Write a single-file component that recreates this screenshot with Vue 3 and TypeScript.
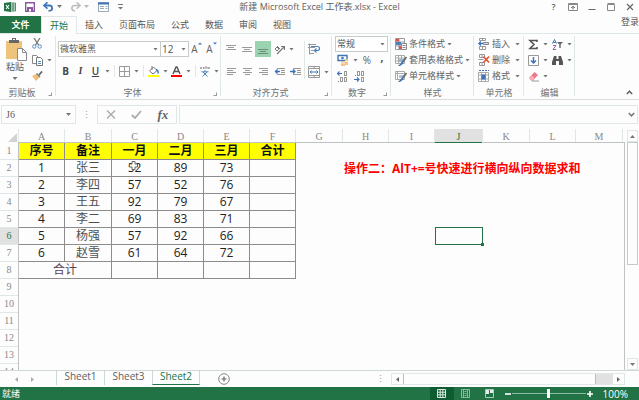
<script setup lang="ts">
import { ref } from 'vue'

interface Row {
  cells: string[]
}

const tabs: string[] = ['插入', '页面布局', '公式', '数据', '审阅', '视图']
const columns: string[] = ['A', 'B', 'C', 'D', 'E', 'F', 'G', 'H', 'I', 'J', 'K', 'L', 'M']
const headings: string[] = ['序号', '备注', '一月', '二月', '三月', '合计']
const rows: Row[] = [
  { cells: ['1', '张三', '52', '89', '73', ''] },
  { cells: ['2', '李四', '57', '52', '76', ''] },
  { cells: ['3', '王五', '92', '79', '67', ''] },
  { cells: ['4', '李二', '69', '83', '71', ''] },
  { cells: ['5', '杨强', '57', '92', '66', ''] },
  { cells: ['6', '赵雪', '61', '64', '72', ''] },
]
const emptyRows: number[] = [9, 10, 11, 12, 13, 14]
const sheets: string[] = ['Sheet1', 'Sheet3', 'Sheet2']
const activeSheet = ref('Sheet2')
const nameBox = ref('J6')
const formula = ref('')
const zoom = ref(100)
</script>

<template>
  <div class="app">
    <header class="title-bar">
      <div class="quick">
        <svg class="logo" width="12" height="10" viewBox="0 0 12 10">
          <path d="M6 1h5.5v8H6z" fill="#fff" stroke="#217346" stroke-width=".8" />
          <path d="M7 3h4M7 5h4M7 7h4M9 1v8" stroke="#217346" stroke-width=".8" />
          <path d="M0 1l7-1v10L0 9z" fill="#217346" />
          <path d="M2 3l3 4M5 3L2 7" stroke="#fff" stroke-width="1.1" />
        </svg>
        <button class="btn save" aria-label="保存">
          <svg width="10" height="10" viewBox="0 0 10 10"><path d="M.7.7h8.6v8.6H.7z" fill="#fff" stroke="#8a5a9e" stroke-width="1.4" /><path d="M2 5h6v4.5H2z" fill="#8a5a9e" /><path d="M4 7h2v2.5H4z" fill="#fff" /></svg>
        </button>
        <button class="btn undo" aria-label="撤消">
          <svg width="11" height="10" viewBox="0 0 11 10"><path d="M1.5 3.5h5a2.6 2.6 0 0 1 1 5L5.5 9" fill="none" stroke="#3d74b8" stroke-width="1.8" /><path d="M4.5.3L.8 3.5l3.7 3.2" fill="none" stroke="#3d74b8" stroke-width="1.6" /></svg>
          <i class="caret"></i>
        </button>
        <button class="btn redo" aria-label="恢复">
          <svg width="11" height="10" viewBox="0 0 11 10"><path d="M9.5 3.5h-5a2.6 2.6 0 0 0-1 5L5 9" fill="none" stroke="#bcbcbc" stroke-width="1.6" /><path d="M6.5.3l3.7 3.2-3.7 3.2" fill="none" stroke="#bcbcbc" stroke-width="1.5" /></svg>
          <i class="caret faint"></i>
        </button>
        <button class="btn form" aria-label="记录单">
          <svg width="11" height="10" viewBox="0 0 11 10"><path d="M.5.5h10v9H.5z" fill="#fff" stroke="#9aa9b8" /><path d="M0 1.500h11" stroke="#3d74b8" stroke-width="2" /><path d="M2 4.500h4M2 6.500h4M7.500 4.500h2M7.500 6.500h2" stroke="#9aa9b8" /></svg>
        </button>
        <button class="btn" aria-label="自定义"><svg width="5" height="6" viewBox="0 0 5 6"><path d="M0 .5h5" stroke="#777" /><path d="M0 3h5L2.500 5.500z" fill="#777" /></svg></button>
      </div>
      <h1>新建 Microsoft Excel 工作表.xlsx - Excel</h1>
      <div class="window-buttons">
        <button class="btn help">?</button>
        <button class="btn" aria-label="功能区显示选项"><svg width="10" height="8" viewBox="0 0 10 8"><path d="M.5.500h9v7h-9zM.5 1.500h9" fill="none" stroke="#888" /><path d="M5 6.500V3.500M3.200 5L5 3.200 6.800 5" fill="none" stroke="#666" /></svg></button>
        <button class="btn" aria-label="最小化"><svg width="8" height="8" viewBox="0 0 8 8"><path d="M.5 6.500h7" stroke="#666" /></svg></button>
        <button class="btn" aria-label="最大化"><svg width="8" height="8" viewBox="0 0 8 8"><path d="M.5 1.500h7v6h-7zM.5.500h7" fill="none" stroke="#888" /></svg></button>
        <button class="btn" aria-label="关闭"><svg width="8" height="8" viewBox="0 0 8 8"><path d="M1 1l6 6M7 1L1 7" stroke="#666" stroke-width="1.200" /></svg></button>
      </div>
    </header>

    <nav class="tabs">
      <button class="tab file">文件</button>
      <button class="tab current">开始</button>
      <button v-for="t in tabs" :key="t" class="tab">{{ t }}</button>
      <a class="login" href="#">登录</a>
    </nav>

    <section class="ribbon">
      <div class="group clipboard">
        <div class="body">
          <button class="btn paste">
            <svg width="21" height="23" viewBox="0 0 21 23"><path d="M0 3h16v18H0z" fill="#eec47c" /><path d="M3 2h3V0h4v2h3v3H3z" fill="#666" /><path d="M7 1.500h2" stroke="#fff" /><path d="M11.500 10.500h5l4 4v8h-9z" fill="#fff" stroke="#888" /><path d="M16.500 10.500v4h4" fill="none" stroke="#888" /></svg>
            <span>粘贴</span>
            <i class="caret"></i>
          </button>
          <div class="clip-tools">
            <button class="btn" aria-label="剪切"><svg width="10" height="11" viewBox="0 0 10 11"><path d="M2 0l4.500 7M8 0L3.500 7" stroke="#777" stroke-width="1.300" /><circle cx="2.300" cy="8.500" r="1.700" fill="none" stroke="#5b8cc4" /><circle cx="7.700" cy="8.500" r="1.700" fill="none" stroke="#5b8cc4" /></svg></button>
            <button class="btn copy" aria-label="复制"><svg width="11" height="11" viewBox="0 0 11 11"><path d="M.5.500h4l2 2v6h-6z" fill="#fff" stroke="#888" /><path d="M4.500 2.500h4l2 2v6h-6z" fill="#fff" stroke="#777" /><path d="M6 6.500h3M6 8.500h3" stroke="#5b8cc4" /></svg><i class="caret"></i></button>
            <button class="btn" aria-label="格式刷"><svg width="11" height="10" viewBox="0 0 11 10"><path d="M0 5l4-2 3.500 3.500L4 10z" fill="#eebf78" /><path d="M4 3l3.500 3.500 1-1L5 2z" fill="#777" /><path d="M7 4l3-3.500" stroke="#666" stroke-width="1.800" /></svg></button>
          </div>
        </div>
        <footer>剪贴板<i class="launcher"></i></footer>
      </div>

      <div class="group font">
        <div class="body col">
          <div class="line">
            <span class="combo family"><select aria-label="字体"><option>微软雅黑</option></select><i class="caret"></i></span>
            <span class="combo size"><select aria-label="字号"><option>12</option></select><i class="caret"></i></span>
            <button class="btn grow" aria-label="增大字号">A<svg width="4" height="10" viewBox="0 0 4 10"><path d="M0 2.500L2 .500l2 2z" fill="#3d74b8" /></svg></button>
            <button class="btn grow" aria-label="减小字号">A<svg width="4" height="10" viewBox="0 0 4 10"><path d="M0 .500h4l-2 2z" fill="#3d74b8" /></svg></button>
          </div>
          <div class="line second">
            <button class="btn letter"><b>B</b></button>
            <button class="btn letter"><em>I</em></button>
            <button class="btn letter"><u>U</u></button>
            <i class="caret"></i>
            <i class="sep"></i>
            <button class="btn drop" aria-label="边框"><svg width="11" height="11" viewBox="0 0 11 11"><path d="M.5.500h10v10H.5zM5.500.500v10M.5 5.500h10" fill="none" stroke="#999" /></svg><i class="caret"></i></button>
            <i class="sep"></i>
            <button class="btn drop" aria-label="填充颜色"><svg width="11" height="11" viewBox="0 0 11 11"><path d="M1.500 5l4-4L9 4.500 5 8z" fill="#fff" stroke="#777" /><path d="M4 0v4" stroke="#777" /><path d="M8 3.500c2 .5 2.500 2 2 4" fill="none" stroke="#3d74b8" stroke-width="1.400" /><path d="M0 9h11v2H0z" fill="#ff0" /></svg><i class="caret"></i></button>
            <button class="btn drop" aria-label="字体颜色"><svg width="11" height="11" viewBox="0 0 11 11"><path d="M2 8l3-7h1l3 7M3.500 5.500h4" fill="none" stroke="#555" stroke-width="1.400" /><path d="M0 9h11v2H0z" fill="#f00" /></svg><i class="caret"></i></button>
            <i class="sep"></i>
            <button class="btn drop" aria-label="拼音"><svg width="10" height="11" viewBox="0 0 10 11"><path d="M0 1l1 2 1-2M3.500 1v2M5 3V1h2v2M8 1l1 2 1-2" fill="none" stroke="#999" /><path d="M5 4v1.500M1.500 5.800h7M3 6l4.500 4.500M7 6l-4.500 4.500" stroke="#4b82bd" /></svg><i class="caret"></i></button>
          </div>
        </div>
        <footer>字体<i class="launcher"></i></footer>
      </div>

      <div class="group align">
        <div class="body">
          <div class="align-tools">
            <div class="line">
              <button class="btn" aria-label="顶端对齐"><svg width="10" height="11" viewBox="0 0 10 11"><path d="M0 1.500h10M2 3.500h6M0 5.500h10" stroke="#999" /></svg></button>
              <button class="btn" aria-label="垂直居中"><svg width="10" height="11" viewBox="0 0 10 11"><path d="M0 3.500h10M2 5.500h6M0 7.500h10" stroke="#999" /></svg></button>
              <button class="btn on" aria-label="底端对齐"><svg width="10" height="11" viewBox="0 0 10 11"><path d="M0 5.500h10M2 7.500h6M0 9.500h10" stroke="#6b8f7c" /></svg></button>
              <button class="btn drop" aria-label="方向"><svg width="11" height="11" viewBox="0 0 11 11"><path d="M3 10l7-7M7 2.500h3.500V6" fill="none" stroke="#777" stroke-width="1.200" /><path d="M1 5l2-2 2 2-2 2zM3 2l3 3" fill="none" stroke="#777" /></svg><i class="caret"></i></button>
            </div>
            <div class="line">
              <button class="btn" aria-label="左对齐"><svg width="9" height="9" viewBox="0 0 9 9"><path d="M0 1.500h9M0 3.500h6M0 5.500h9M0 7.500h6" stroke="#999" /></svg></button>
              <button class="btn" aria-label="居中"><svg width="9" height="9" viewBox="0 0 9 9"><path d="M0 1.500h9M2 3.500h5M0 5.500h9M2 7.500h5" stroke="#999" /></svg></button>
              <button class="btn" aria-label="右对齐"><svg width="9" height="9" viewBox="0 0 9 9"><path d="M0 1.500h9M3 3.500h6M0 5.500h9M3 7.500h6" stroke="#999" /></svg></button>
              <button class="btn" aria-label="减少缩进"><svg width="11" height="9" viewBox="0 0 11 9"><path d="M3 1.500h8M7 3.500h4M7 5.500h4M3 7.500h8" stroke="#999" /><path d="M6 4.500H1.500M3.500 2.500l-2 2 2 2" fill="none" stroke="#3d74b8" stroke-width="1.400" /></svg></button>
              <button class="btn" aria-label="增加缩进"><svg width="11" height="9" viewBox="0 0 11 9"><path d="M3 1.500h8M7 3.500h4M7 5.500h4M3 7.500h8" stroke="#999" /><path d="M0 4.500h4.500M3 2.500l2 2-2 2" fill="none" stroke="#3d74b8" stroke-width="1.400" /></svg></button>
            </div>
          </div>
          <div class="merge-tools">
            <button class="btn" aria-label="自动换行"><svg width="12" height="12" viewBox="0 0 12 12"><path d="M1.500.500v11M0 1.500h8M0 4.500h7M3 7.500h3M1 10.500h5" stroke="#999" /><path d="M3 3.500h6.500a1.500 1.500 0 0 1 0 4H7M8.500 5.500l-2 2 2 2" fill="none" stroke="#4b82bd" stroke-width="1.200" /></svg></button>
            <button class="btn drop" aria-label="合并后居中"><svg width="12" height="12" viewBox="0 0 12 12"><path d="M.5.500h11v11H.5zM.5 2.500h11M.5 9.500h11M6 .500v2M6 9.500v2" fill="none" stroke="#999" /><path d="M2 6h8M3.500 4.500L2 6l1.500 1.500M8.500 4.500L10 6 8.500 7.500" fill="none" stroke="#3d74b8" /></svg><i class="caret"></i></button>
          </div>
        </div>
        <footer>对齐方式<i class="launcher"></i></footer>
      </div>

      <div class="group number">
        <div class="body stack">
          <span class="combo"><select aria-label="数字格式"><option>常规</option></select><i class="caret"></i></span>
          <div class="line">
            <button class="btn drop" aria-label="会计数字格式"><svg width="12" height="12" viewBox="0 0 12 12"><path d="M1 1.500h9v5H1z" fill="#fff" stroke="#3d74b8" stroke-width="1.400" /><circle cx="5.500" cy="4" r="1.300" fill="#3d74b8" /><path d="M4 7h4v5H4zM8 5h3v6H8z" fill="#f1c48d" /><path d="M4 9h4M8 7.500h3" stroke="#fff" stroke-width=".7" /></svg><i class="caret"></i></button>
            <button class="btn percent">%</button>
            <button class="btn comma"><b>,</b></button>
          </div>
          <div class="line decimals">
            <button class="btn" aria-label="增加小数位数"><svg width="10" height="11" viewBox="0 0 10 11"><path d="M0 2.500h5M2.500.500l-2 2 2 2" fill="none" stroke="#3d74b8" stroke-width="1.200" /><rect x="7.500" y=".5" width="2" height="4" fill="none" stroke="#999" /><rect x="3.500" y="6.500" width="2" height="4" fill="none" stroke="#999" /><rect x="7.500" y="6.500" width="2" height="4" fill="none" stroke="#999" /><path d="M1 10.500h1" stroke="#888" /></svg></button>
            <button class="btn" aria-label="减少小数位数"><svg width="10" height="11" viewBox="0 0 10 11"><path d="M0 8.500h5M3 6.500l2 2-2 2" fill="none" stroke="#3d74b8" stroke-width="1.200" /><rect x="3.500" y=".5" width="2" height="4" fill="none" stroke="#999" /><rect x="7.500" y=".5" width="2" height="4" fill="none" stroke="#999" /><rect x="7.500" y="6.500" width="2" height="4" fill="none" stroke="#999" /><path d="M1 4.500h1" stroke="#888" /></svg></button>
          </div>
        </div>
        <footer>数字<i class="launcher"></i></footer>
      </div>

      <div class="group styles">
        <div class="body stack">
          <button class="btn item"><svg width="12" height="12" viewBox="0 0 12 12"><path d="M.5.500h9v11h-9zM.5 4h9M.5 8h9M4 .500v11" fill="#fff" stroke="#999" /><path d="M1 1h3v2.500H1zM4 8h3v3H4z" fill="#d9534f" /><path d="M1 4h5v3H1z" fill="#4b82bd" /><path d="M6.500 5.500h5v6h-5z" fill="#fff" stroke="#888" /><path d="M7.500 7.500h3M7.500 9.500h3" stroke="#888" /></svg>条件格式<i class="caret"></i></button>
          <button class="btn item"><svg width="12" height="11" viewBox="0 0 12 11"><path d="M.5.500h9v8h-9zM.5 3h9M.5 6h9M3.500.500v8M6.500.500v8" fill="#fff" stroke="#aaa" /><path d="M4 4h5v3H4z" fill="#8fb3dc" /><path d="M11.500 2L7 8" stroke="#666" stroke-width="1.800" /><path d="M7 7l1.500 1.500L5 11H3z" fill="#3d74b8" /></svg>套用表格格式<i class="caret"></i></button>
          <button class="btn item"><svg width="12" height="11" viewBox="0 0 12 11"><path d="M.5.500h9v8h-9zM.5 2.500h9M2.500.500v8" fill="#fff" stroke="#aaa" /><path d="M4 4h5v3H4z" fill="#a9c4e3" /><path d="M11.500 2L7 8" stroke="#666" stroke-width="1.800" /><path d="M7 7l1.500 1.500L5 11H3z" fill="#3d74b8" /></svg>单元格样式<i class="caret"></i></button>
        </div>
        <footer>样式</footer>
      </div>

      <div class="group cells">
        <div class="body stack">
          <button class="btn item"><svg width="12" height="12" viewBox="0 0 12 12"><path d="M1.500.500h6v2h-6zM1.500 8.500h6v3h-6zM4.500.500v2M4.500 8.500v3" fill="#fff" stroke="#999" /><path d="M5.500 4.500h5v2h-5z" fill="#cfe0f2" stroke="#888" /><path d="M5 5.500H.8M2.800 3.500l-2 2 2 2" fill="none" stroke="#3d74b8" stroke-width="1.300" /></svg>插入<i class="caret"></i></button>
          <button class="btn item"><svg width="12" height="12" viewBox="0 0 12 12"><path d="M1.500.500h5v3h-5zM1.500 8.500h5v3h-5zM4 .500v3M4 8.500v3M.5 5.500h5" fill="#fff" stroke="#999" /><path d="M5.500 2.500l5.500 6M11 2.500l-5.500 6" stroke="#e2532d" stroke-width="1.700" /></svg>删除<i class="caret"></i></button>
          <button class="btn item"><svg width="12" height="12" viewBox="0 0 12 12"><path d="M1 .500h10" stroke="#3d74b8" stroke-dasharray="2 1" /><path d="M.5 2.500h10v9H.5zM3.500 2.500v9M7.500 2.500v9M.5 5h10M.5 9h10" fill="#fff" stroke="#aaa" /><path d="M3.500 4.500h4v5h-4z" fill="#3d74b8" /></svg>格式<i class="caret"></i></button>
        </div>
        <footer>单元格</footer>
      </div>

      <div class="group edit">
        <div class="body stack">
          <div class="line">
            <button class="btn drop" aria-label="求和"><svg width="11" height="11" viewBox="0 0 11 11"><path d="M9 3V1.500H2L6 5.500 2 9.500h7V8" fill="none" stroke="#555" stroke-width="1.600" /></svg><i class="caret"></i></button>
            <button class="btn drop" aria-label="排序和筛选"><svg width="11" height="11" viewBox="0 0 11 11"><path d="M.5 4.500L2.500.500l2 4M1.200 3.500h2.600" fill="none" stroke="#3d74b8" /><path d="M1 6.500h3L1 10.500h3" fill="none" stroke="#9a63b0" /><path d="M5 3h6L8.700 5.500V9H7.300V5.500z" fill="#666" /></svg><i class="caret"></i></button>
          </div>
          <div class="line">
            <button class="btn drop" aria-label="填充"><svg width="11" height="11" viewBox="0 0 11 11"><path d="M.5.500h10v10H.5z" fill="#fff" stroke="#999" /><path d="M5.500 2v6M3 5.500L5.500 8 8 5.500" fill="none" stroke="#3d74b8" stroke-width="1.500" /></svg><i class="caret"></i></button>
            <button class="btn drop" aria-label="查找和选择"><svg width="11" height="11" viewBox="0 0 11 11"><path d="M2 1h2.500v3h2V1H9l2 6v3H7V6H4v4H0V7z" fill="#555" /></svg><i class="caret"></i></button>
          </div>
          <div class="line">
            <button class="btn drop" aria-label="清除"><svg width="11" height="11" viewBox="0 0 11 11"><path d="M1 7l5.500-6L10 4 5 9.500H3z" fill="#e8788a" /><path d="M1 7l2.500-2.700L7 7.300 5 9.500H3z" fill="#f3aeb8" /><path d="M4 10h7" stroke="#999" /></svg><i class="caret"></i></button>
          </div>
        </div>
        <footer>编辑</footer>
      </div>
      <button class="btn collapse" aria-label="折叠功能区"><svg width="7" height="5" viewBox="0 0 7 5"><path d="M.8 4L3.500 1.200 6.200 4" fill="none" stroke="#555" stroke-width="1.300" /></svg></button>
    </section>

    <section class="formula-bar">
      <label class="name-box"><input v-model="nameBox" aria-label="名称框" /><i class="caret"></i></label>
      <span class="dots">⋮</span>
      <div class="fx-box">
        <button class="btn" aria-label="取消"><svg width="10" height="9" viewBox="0 0 10 9"><path d="M1 .500l8 8M9 .500l-8 8" stroke="#aaa" stroke-width="1.300" /></svg></button>
        <button class="btn" aria-label="输入"><svg width="11" height="9" viewBox="0 0 11 9"><path d="M.8 5L4 8l6-7" fill="none" stroke="#aaa" stroke-width="1.800" /></svg></button>
        <button class="btn fx"><i>fx</i></button>
      </div>
      <label class="formula"><input v-model="formula" aria-label="编辑栏" /><svg width="7" height="5" viewBox="0 0 7 5"><path d="M.8 1L3.500 3.800 6.200 1" fill="none" stroke="#777" stroke-width="1.600" /></svg></label>
    </section>

    <main class="workspace">
      <div class="grid">
        <table>
          <colgroup>
            <col class="c-head" />
            <col v-for="c in columns" :key="c" :class="'c-' + c.toLowerCase()" />
          </colgroup>
          <thead>
            <tr>
              <th class="corner"><svg width="9" height="9" viewBox="0 0 9 9"><path d="M9 0v9H0z" fill="#d2d2d2" /></svg></th>
              <th v-for="c in columns" :key="c" :class="{ picked: c === 'J' }">{{ c }}</th>
            </tr>
          </thead>
          <tbody>
            <tr>
              <th>1</th>
              <td v-for="h in headings" :key="h" class="boxed heading">{{ h }}</td>
              <td colspan="7"></td>
            </tr>
            <tr v-for="(r, i) in rows" :key="i">
              <th :class="{ picked: i === 4 }">{{ i + 2 }}</th>
              <td v-for="(v, k) in r.cells" :key="k" class="boxed" :class="{ person: k === 1 }">
                {{ v }}
                <svg v-if="i === 0 && k === 2" class="pointer" width="9" height="9" viewBox="0 0 9 9"><path d="M3 .500h3V3h2.500v3H6v2.500H3V6H.5V3H3z" fill="#fff" stroke="#666" /></svg>
              </td>
              <template v-if="i === 0">
                <td></td>
                <td colspan="6" class="note">操作二：AlT+=号快速进行横向纵向数据求和</td>
              </template>
              <template v-else-if="i === 4">
                <td colspan="3"></td>
                <td class="selected"><i class="frame"></i></td>
                <td colspan="3"></td>
              </template>
              <td v-else colspan="7"></td>
            </tr>
            <tr>
              <th>8</th>
              <td colspan="2" class="boxed total">合计</td>
              <td v-for="n in 4" :key="n" class="boxed"></td>
              <td colspan="7"></td>
            </tr>
            <tr v-for="n in emptyRows" :key="n">
              <th>{{ n }}</th>
              <td colspan="13"></td>
            </tr>
          </tbody>
        </table>
      </div>
      <div class="v-scroll">
        <button class="btn arrow" aria-label="向上滚动"><svg width="5" height="3" viewBox="0 0 5 3"><path d="M0 3L2.500 0 5 3z" fill="#777" /></svg></button>
        <div class="track"><div class="thumb"></div></div>
        <button class="btn arrow" aria-label="向下滚动"><svg width="5" height="3" viewBox="0 0 5 3"><path d="M0 0h5L2.500 3z" fill="#777" /></svg></button>
      </div>
    </main>

    <section class="sheet-bar">
      <div class="steps">
        <button class="btn" aria-label="上一张"><svg width="3" height="5" viewBox="0 0 3 5"><path d="M3 0v5L0 2.500z" fill="#aaa" /></svg></button>
        <button class="btn" aria-label="下一张"><svg width="3" height="5" viewBox="0 0 3 5"><path d="M0 0v5l3-2.500z" fill="#aaa" /></svg></button>
      </div>
      <button v-for="s in sheets" :key="s" class="sheet" :class="{ active: s === activeSheet }" @click="activeSheet = s">{{ s }}</button>
      <button class="btn add" aria-label="新工作表"><svg width="12" height="12" viewBox="0 0 12 12"><circle cx="6" cy="6" r="5.300" fill="none" stroke="#888" /><path d="M3.500 6h5M6 3.500v5" stroke="#666" stroke-width="1.200" /></svg></button>
      <span class="dots">⋮</span>
      <div class="h-scroll">
        <button class="btn" aria-label="向左滚动"><svg width="3" height="5" viewBox="0 0 3 5"><path d="M3 0v5L0 2.500z" fill="#666" /></svg></button>
        <div class="h-thumb"></div>
        <div class="h-rest"></div>
        <button class="btn" aria-label="向右滚动"><svg width="3" height="5" viewBox="0 0 3 5"><path d="M0 0v5l3-2.500z" fill="#666" /></svg></button>
      </div>
    </section>

    <footer class="status">
      <span>就绪</span>
      <div class="views">
        <button class="btn on" aria-label="普通"><svg width="9" height="9" viewBox="0 0 9 9"><path d="M.5.500h8v8h-8zM3.200.500v8M5.800.500v8M.5 3.200h8M.5 5.800h8" fill="none" stroke="#dcebe2" /></svg></button>
        <button class="btn" aria-label="页面布局"><svg width="9" height="9" viewBox="0 0 9 9"><path d="M.5.500h8v8h-8zM2.500.500v8M6.500.500v8M3.500 2.500h2M3.500 4.500h2M3.500 6.500h2" fill="none" stroke="#8fb9a2" /></svg></button>
        <button class="btn" aria-label="分页预览"><svg width="9" height="9" viewBox="0 0 9 9"><path d="M.5.500h8v8h-8z" fill="none" stroke="#a9cbb7" /><path d="M1 1h3v4H1zM5 1h3v3H5z" fill="#e3f0e8" /></svg></button>
      </div>
      <button class="btn step" aria-label="缩小"><svg width="6" height="6" viewBox="0 0 6 6"><path d="M0 3h6" stroke="#fff" stroke-width="1.600" /></svg></button>
      <input v-model="zoom" class="zoom" type="range" min="0" max="200" aria-label="显示比例" />
      <button class="btn step" aria-label="放大"><svg width="6" height="6" viewBox="0 0 6 6"><path d="M0 3h6M3 0v6" stroke="#fff" stroke-width="1.600" /></svg></button>
      <span class="percent-label">{{ zoom }}%</span>
    </footer>
  </div>
</template>

<style>
body {
  margin: 0;
  background: #fdfdfd;
}
</style>

<style scoped>
.app {
  --green: #217346;
  --line: #dfe7e7;
  display: flex;
  flex-direction: column;
  height: 100vh;
  overflow: hidden;
  background: #fdfdfd;
  color: #606060;
  font: 9px/12px "Open Sans", "Noto Sans CJK SC", sans-serif;
}
.app *,
.app *::before {
  box-sizing: border-box;
}
button,
input,
select {
  font: inherit;
  color: inherit;
  margin: 0;
  padding: 0;
  border: 0;
  background: none;
  outline: 0;
}
svg {
  display: block;
  flex: none;
}
.btn {
  display: flex;
  align-items: center;
  justify-content: center;
  white-space: nowrap;
}
.caret {
  flex: none;
  width: 5px;
  height: 3px;
  background: #777;
  clip-path: polygon(0 0, 100% 0, 50% 100%);
}
.faint {
  opacity: 0.5;
}
.line {
  display: flex;
  align-items: center;
}
.drop {
  gap: 4px;
}

/* title bar */
.title-bar {
  display: grid;
  grid-template-columns: 1fr auto 1fr;
  align-items: center;
  height: 13px;
  flex: none;
}
.quick {
  display: flex;
  align-items: center;
  padding-left: 4px;
}
.save {
  margin-left: 9px;
}
.undo,
.redo {
  gap: 3px;
  margin-left: 8px;
}
.form {
  margin: 0 9px;
}
h1 {
  margin: 0;
  font-size: 9px;
  font-weight: 400;
  line-height: 13px;
}
.window-buttons {
  display: flex;
  justify-content: flex-end;
}
.window-buttons .btn {
  width: 19px;
  height: 13px;
}
.help {
  font-weight: 600;
}

/* tabs */
.tabs {
  display: flex;
  flex: none;
  height: 20px;
  padding-top: 3px;
  color: #555;
}
.tab {
  padding: 0 8px;
  line-height: 16px;
}
.file {
  width: 41px;
  background: var(--green);
  color: #fff;
  font-weight: 600;
}
.current {
  height: 18px;
  background: #fdfdfd;
  border: 1px solid var(--line);
  border-bottom: 0;
  color: var(--green);
  position: relative;
  z-index: 1;
}
.login {
  margin-left: auto;
  color: inherit;
  text-decoration: none;
}

/* ribbon */
.ribbon {
  display: flex;
  flex: none;
  height: 67px;
  border-top: 1px solid var(--line);
  border-bottom: 1px solid #d8dede;
}
.group {
  display: flex;
  flex-direction: column;
  flex: none;
  position: relative;
}
.group::before {
  content: "";
  position: absolute;
  top: 2px;
  right: 0;
  bottom: 3px;
  width: 1px;
  background: var(--line);
}
.body {
  display: flex;
  height: 52px;
  flex: none;
}
.group footer {
  position: relative;
  line-height: 13px;
  text-align: center;
  color: #707070;
  padding-right: 12px;
}
.launcher {
  position: absolute;
  right: 4px;
  bottom: 3px;
  width: 4px;
  height: 4px;
  border: 1px solid #999;
  border-top-color: transparent;
  border-left-color: transparent;
}
.clipboard {
  width: 56px;
}
.paste {
  flex-direction: column;
  justify-content: flex-start;
  width: 26px;
  padding: 4px 0 0 4px;
}
.paste svg {
  margin-left: 3px;
}
.paste .caret {
  margin-top: 4px;
}
.clip-tools {
  display: flex;
  flex-direction: column;
  justify-content: space-between;
  align-items: flex-start;
  padding: 4px 0 5px 6px;
}
.copy {
  gap: 4px;
}
.font {
  width: 165px;
}
.col {
  flex-direction: column;
  padding: 7px 0 0 2px;
  gap: 6px;
}
.combo {
  position: relative;
  display: flex;
  align-items: center;
  height: 16px;
  border: 1px solid #c6cccc;
  background: #fff;
}
.combo select {
  appearance: none;
  width: 100%;
  height: 14px;
  padding-left: 1px;
  line-height: 14px;
  color: #555;
}
.combo .caret {
  position: absolute;
  right: 2px;
}
.family {
  width: 103px;
}
.size {
  width: 28px;
  border-left: 0;
  font-size: 10px;
}
.grow {
  width: 15px;
  font-size: 10px;
}
.grow svg {
  margin-bottom: 4px;
}
.second {
  height: 16px;
}
.letter {
  width: 15px;
  font-size: 10px;
  color: #444;
}
.letter em {
  font-family: "Liberation Serif", serif;
  font-weight: 700;
}
.letter u {
  font-weight: 600;
}
.sep {
  width: 1px;
  height: 12px;
  margin: 0 4px;
  background: var(--line);
}
.second > .caret {
  margin-left: 2px;
}
.second > .drop + .drop {
  margin-left: 3px;
}
.align {
  width: 111px;
}
.align .body {
  padding-top: 7px;
}
.align-tools {
  display: flex;
  flex-direction: column;
  gap: 6px;
  width: 83px;
  padding-left: 2px;
}
.align-tools .line {
  height: 16px;
}
.align-tools .btn {
  width: 16px;
  height: 16px;
}
.align-tools .drop {
  width: 26px;
}
.align-tools .on {
  background: #9bd3b1;
}
.merge-tools {
  display: flex;
  flex-direction: column;
  align-items: flex-start;
  justify-content: space-between;
  height: 38px;
  padding: 2px 0 1px 3px;
  border-left: 1px solid var(--line);
}
.number {
  width: 59px;
  padding-left: 3px;
}
.stack {
  flex-direction: column;
  padding-top: 2px;
}
.number .combo {
  width: 53px;
}
.number .line {
  height: 16px;
  padding-left: 2px;
}
.percent {
  width: 18px;
  font-size: 10px;
}
.comma {
  width: 12px;
  height: 14px;
  align-items: flex-start;
  font-size: 12px;
  line-height: 8px;
}
.number .decimals {
  gap: 7px;
}
.styles {
  width: 83px;
}
.cells {
  width: 50px;
}
.styles footer,
.cells footer,
.edit footer {
  padding-right: 0;
}
.item {
  justify-content: flex-start;
  gap: 2px;
  height: 16px;
  padding-left: 4px;
}
.cells .caret {
  margin-left: 3px;
}
.edit {
  width: 51px;
}
.edit .line {
  height: 16px;
  gap: 4px;
  padding-left: 4px;
}
.collapse {
  margin: auto 6px 4px auto;
}

/* formula bar */
.formula-bar {
  display: flex;
  align-items: center;
  flex: none;
  height: 29px;
  padding: 0 1px;
}
.name-box,
.fx-box,
.formula {
  display: flex;
  align-items: center;
  height: 19px;
  border: 1px solid var(--line);
}
.name-box {
  width: 75px;
  padding: 0 4px;
  font: 10px "Liberation Serif", serif;
}
.name-box input {
  width: 100%;
}
.dots {
  width: 21px;
  text-align: center;
  color: #999;
}
.fx-box {
  width: 80px;
  justify-content: space-around;
}
.fx {
  font: 700 13px "Liberation Serif", serif;
  color: #666;
}
.formula {
  flex: 1;
  margin-left: 2px;
  padding: 0 2px;
}
.formula input {
  flex: 1;
}

/* worksheet */
.workspace {
  display: flex;
  flex: 1;
  min-height: 0;
  border-bottom: 1px solid #cfd8d8;
}
.grid {
  flex: 1;
  min-width: 0;
  overflow: hidden;
  position: relative;
}
.grid::after {
  content: "";
  position: absolute;
  inset: 13px 0 0 18px;
  border: 1px solid #bfc3c3;
  border-width: 1px 1px 0;
  pointer-events: none;
}
table {
  width: 623px;
  table-layout: fixed;
  border-collapse: separate;
  border-spacing: 0;
  font-size: 12px;
  color: #222;
}
.c-head {
  width: 19px;
}
.c-a,
.c-c,
.c-d,
.c-e,
.c-f,
.c-h,
.c-i,
.c-l {
  width: 46px;
}
.c-b,
.c-g,
.c-k,
.c-m {
  width: 47px;
}
.c-j {
  width: 48px;
}
th {
  padding: 0;
  border-right: 1px solid var(--line);
  font: 10px/13px "Liberation Serif", serif;
  color: #888;
}
thead th {
  height: 14px;
}
tbody th {
  height: 17px;
  border-bottom: 1px solid var(--line);
  border-right-color: #bfc3c3;
  line-height: 16px;
}
thead th.picked {
  position: relative;
  z-index: 1;
  background: #e1e1e1;
  box-shadow: inset 0 -1px var(--green);
  color: var(--green);
}
tbody th.picked {
  background: #e1e1e1;
  border-right-color: var(--green);
  color: var(--green);
}
.corner svg {
  margin: 2px 1px 0 auto;
}
td {
  height: 17px;
  padding: 0;
  line-height: 16px;
  text-align: center;
  white-space: nowrap;
}
.boxed {
  position: relative;
  border-right: 1px solid #8c8c8c;
  border-bottom: 1px solid #8c8c8c;
}
.person {
  color: #505050;
}
.heading {
  background: #ff0;
  color: #111;
  font-weight: 700;
}
.note {
  text-align: left;
  padding-left: 1px;
  color: #f00;
  font-weight: 700;
}
.total {
  color: #5a4050;
}
.pointer {
  position: absolute;
  left: 17px;
  top: 1px;
}
.selected {
  position: relative;
}
.frame {
  position: absolute;
  inset: -1px 0 0 0;
  border: 1px solid var(--green);
}
.frame::before {
  content: "";
  position: absolute;
  right: -2px;
  bottom: -2px;
  width: 3px;
  height: 3px;
  background: var(--green);
}
.v-scroll {
  display: flex;
  flex-direction: column;
  width: 14px;
  padding: 1px 1px 0 2px;
}
.arrow {
  height: 12px;
  border: 1px solid var(--line);
}
.track {
  flex: 1;
}
.thumb {
  height: 57%;
  border: 1px solid #c4caca;
}

/* sheet tabs */
.sheet-bar {
  display: flex;
  flex: none;
  height: 16px;
  padding-right: 14px;
}
.steps {
  display: flex;
  align-items: center;
  justify-content: flex-end;
  gap: 13px;
  width: 56px;
  padding-right: 22px;
}
.sheet {
  width: 48px;
  height: 14px;
  border-left: 1px solid #cfd8d8;
  font-size: 10px;
  line-height: 11px;
  padding-bottom: 3px;
}
.active {
  border-right: 1px solid #cfd8d8;
  border-bottom: 1px solid var(--green);
  padding-bottom: 2px;
  color: var(--green);
}
.add {
  margin-left: 18px;
}
.sheet-bar .dots {
  margin-left: auto;
  line-height: 16px;
}
.h-scroll {
  display: flex;
  width: 234px;
  height: 12px;
  margin-top: 2px;
  border: 1px solid var(--line);
}
.h-scroll .btn {
  width: 11px;
}
.h-thumb {
  flex: 1;
  border: 1px solid #b9bfbf;
  border-width: 0 1px;
}
.h-rest {
  width: 17px;
  background: #e1e1e1;
}

/* status bar */
.status {
  display: flex;
  align-items: center;
  flex: none;
  height: 13px;
  padding: 0 11px 0 2px;
  background: var(--green);
  color: #fff;
}
.views {
  display: flex;
  margin-left: auto;
}
.views .btn {
  width: 24px;
  height: 13px;
}
.views .on {
  background: #0f5c33;
}
.step {
  margin: 0 1px;
}
.views + .step {
  margin-left: 3px;
}
.zoom {
  appearance: none;
  width: 74px;
  height: 9px;
}
.zoom::-webkit-slider-runnable-track {
  height: 9px;
  background: linear-gradient(#8fb9a2, #8fb9a2) center / 100% 1px no-repeat;
}
.zoom::-webkit-slider-thumb {
  appearance: none;
  width: 3px;
  height: 9px;
  background: #fff;
}
.percent-label {
  margin-left: 9px;
  font-size: 10px;
}
</style>
